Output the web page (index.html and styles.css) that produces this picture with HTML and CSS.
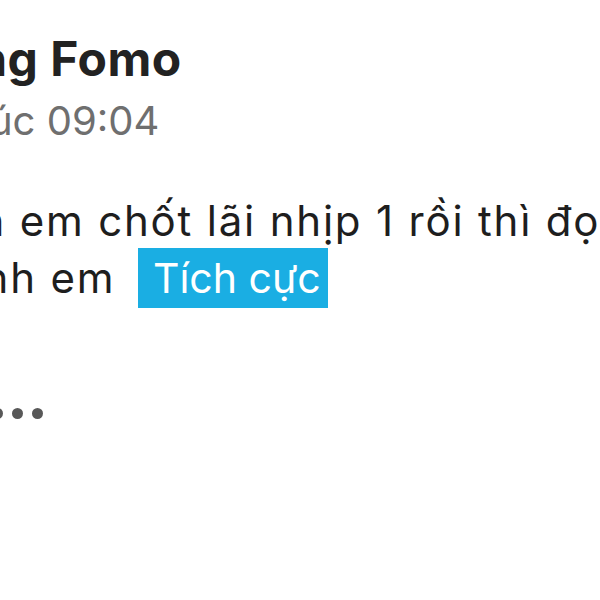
FILE: index.html
```html
<!DOCTYPE html>
<html lang="vi">
<head>
    <meta charset="UTF-8">
    <meta name="viewport" content="width=device-width, initial-scale=1.0">
    <title>Bài viết</title>
    <link rel="stylesheet" href="styles.css">
</head>
<body>
    <div class="post">
        <div class="post-head">
            <div class="author">Hoàng Fomo</div>
            <div class="time">Hôm nay lúc 09:04</div>
        </div>

        <div class="post-body">
            <p class="line line-1">Anh em chốt lãi nhịp 1 rồi thì đọc lệnh tiếp</p>
            <p class="line line-2">cùng anh em <span class="tag">Tích cực</span></p>
        </div>

        <div class="more">
            <span class="dot"></span>
            <span class="dot"></span>
            <span class="dot"></span>
        </div>
    </div>
</body>
</html>
```

FILE: styles.css
```css
body {
    margin: 0;
    padding: 0;
    background-color: #fff;
    font-family: 'Inter', 'Roboto', sans-serif;
    color: #1e1e1e;
    overflow: hidden;
    width: 600px;
    height: 600px;
}

.post {
    padding-top: 30px;
    white-space: nowrap;
}

.author {
    margin-left: -118px;
    font-size: 48px;
    font-weight: 700;
    line-height: 58px;
    letter-spacing: 0.5px;
    color: #222;
}

.time {
    margin-left: -200px;
    margin-top: 8px;
    font-size: 40px;
    line-height: 50px;
    color: #6f6f6f;
}

.post-body {
    margin-top: 47px;
}

.line {
    margin: 0;
    font-size: 42px;
    line-height: 55px;
    letter-spacing: 1.8px;
}

.line-1 {
    margin-left: -78px;
}

.line-2 {
    margin-left: -162px;
}

.tag {
    display: inline-block;
    background-color: #1aaee3;
    color: #fff;
    padding: 0 7px 0 15px;
    font-size: 41px;
    letter-spacing: 0;
    line-height: 60px;
    margin-left: 9px;
}

.more {
    display: flex;
    gap: 9px;
    margin-top: 100px;
    margin-left: -8px;
}

.dot {
    width: 11px;
    height: 11px;
    border-radius: 50%;
    background-color: #585858;
}
```
